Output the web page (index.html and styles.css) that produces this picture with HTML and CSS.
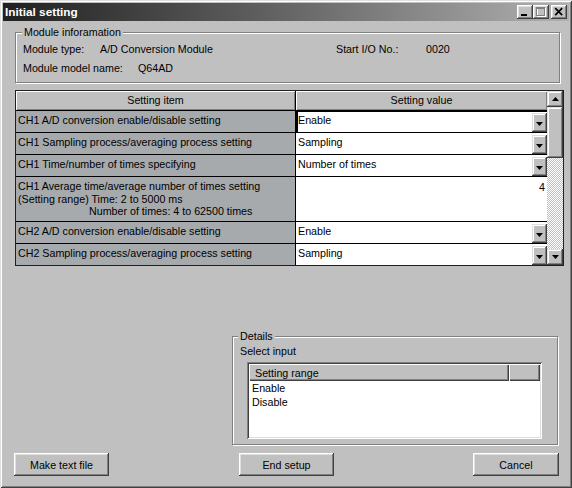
FILE: index.html
```html
<!DOCTYPE html>
<html>
<head>
<meta charset="utf-8">
<link rel="stylesheet" href="styles.css">
</head>
<body>
<div class="window">
  <div class="titlebar">
    <span class="title">Initial setting</span>
    <div class="caption-btns">
      <span class="cbtn"><svg width="16" height="14" viewBox="0 0 16 14"><rect x="4" y="9" width="6" height="2" fill="#000"/></svg></span>
      <span class="cbtn"><svg width="16" height="14" viewBox="0 0 16 14"><rect x="4.5" y="3.5" width="8" height="8" fill="none" stroke="#fff"/><rect x="3.5" y="2.5" width="8" height="8" fill="none" stroke="#808080"/><rect x="3" y="2" width="9" height="2" fill="#808080"/></svg></span>
      <span class="cbtn close"><svg width="16" height="14" viewBox="0 0 16 14"><path d="M4.2 3.2l7 7M11.2 3.2l-7 7" stroke="#000" stroke-width="1.7" fill="none"/></svg></span>
    </div>
  </div>
  <div class="client">
    <fieldset class="group module">
      <legend class="legend">Module inforamation</legend>
      <div class="info">
        <div class="info-row"><span class="k1">Module type:</span><span class="v1">A/D Conversion Module</span><span class="k2">Start I/O No.:</span><span>0020</span></div>
        <div class="info-row"><span class="k3">Module model name:</span><span>Q64AD</span></div>
      </div>
    </fieldset>

    <div class="grid-frame">
      <div class="grid">
        <div class="row head"><div class="hc hc1">Setting item</div><div class="hc hc2">Setting value</div></div>
        <div class="row"><div class="item">CH1 A/D conversion enable/disable setting</div><div class="val focus"><span class="vtext">Enable</span><span class="dd"><svg width="7" height="4" viewBox="0 0 7 4"><path d="M0 0h7L3.5 4z" fill="#000"/></svg></span></div></div>
        <div class="row"><div class="item">CH1 Sampling process/averaging process setting</div><div class="val"><span class="vtext">Sampling</span><span class="dd"><svg width="7" height="4" viewBox="0 0 7 4"><path d="M0 0h7L3.5 4z" fill="#000"/></svg></span></div></div>
        <div class="row"><div class="item">CH1 Time/number of times specifying</div><div class="val"><span class="vtext">Number of times</span><span class="dd"><svg width="7" height="4" viewBox="0 0 7 4"><path d="M0 0h7L3.5 4z" fill="#000"/></svg></span></div></div>
        <div class="row tall"><div class="item multi"><span>CH1 Average time/average number of times setting</span><span>(Setting range) Time: 2 to 5000 ms</span><span class="indent">Number of times: 4 to 62500 times</span></div><div class="val num">4</div></div>
        <div class="row"><div class="item">CH2 A/D conversion enable/disable setting</div><div class="val"><span class="vtext">Enable</span><span class="dd"><svg width="7" height="4" viewBox="0 0 7 4"><path d="M0 0h7L3.5 4z" fill="#000"/></svg></span></div></div>
        <div class="row last"><div class="item">CH2 Sampling process/averaging process setting</div><div class="val"><span class="vtext">Sampling</span><span class="dd"><svg width="7" height="4" viewBox="0 0 7 4"><path d="M0 0h7L3.5 4z" fill="#000"/></svg></span></div></div>
      </div>
      <div class="vscroll">
        <span class="sb-btn up"><svg width="7" height="4" viewBox="0 0 7 4"><path d="M0 4h7L3.5 0z" fill="#000"/></svg></span>
        <span class="thumb"></span>
        <span class="track"></span>
        <span class="sb-btn down"><svg width="7" height="4" viewBox="0 0 7 4"><path d="M0 0h7L3.5 4z" fill="#000"/></svg></span>
      </div>
    </div>

    <fieldset class="group details">
      <legend class="legend">Details</legend>
      <div class="details-body">
        <div class="sel-label">Select input</div>
        <div class="listbox">
          <div class="lb-head"><span class="lbh lbh1">Setting range</span><span class="lbh lbh2"></span></div>
          <div class="lb-item">Enable</div>
          <div class="lb-item">Disable</div>
        </div>
      </div>
    </fieldset>

    <div class="buttons">
      <span class="btn btn-make">Make text file</span>
      <span class="btn btn-end">End setup</span>
      <span class="btn btn-cancel">Cancel</span>
    </div>
  </div>
</div>
</body>
</html>
```

FILE: styles.css
```css
html, body {
  margin: 0;
  padding: 0;
  background: #c0c0c0;
}
body {
  font-family: "Liberation Sans", Arial, sans-serif;
  font-size: 10.7px;
  color: #000;
}
.window {
  width: 572px;
  height: 488px;
  box-sizing: border-box;
  padding: 3px;
  background: #c0c0c0;
  box-shadow: inset 1px 1px #dfdfdf, inset -1px -1px #404040, inset 2px 2px #fff, inset -2px -2px #808080;
}
.titlebar {
  height: 18px;
  display: flex;
  align-items: center;
  padding-left: 2px;
  background: linear-gradient(to right, #202020, #5e5e5e 45%, #b0b0b0);
}
.title {
  color: #fff;
  font-weight: bold;
  font-size: 11.8px;
  flex: 1;
}
.caption-btns {
  display: flex;
  padding-right: 2px;
}
.cbtn {
  width: 16px;
  height: 14px;
  background: #c0c0c0;
  box-shadow: inset -1px -1px #404040, inset 1px 1px #fff, inset -2px -2px #808080, inset 2px 2px #dfdfdf;
  display: block;
}
.cbtn svg { display: block; }
.cbtn.close { margin-left: 2px; }

.client {
  display: flex;
  flex-direction: column;
}

.group {
  margin: 0;
  padding: 0;
  border: 1px solid #808080;
  box-shadow: inset 1px 1px 0 #fff, 1px 1px 0 #fff;
  min-width: 0;
  box-sizing: border-box;
}
.legend {
  padding: 0 2px;
  margin-left: 6px;
  line-height: 12px;
  background: #c0c0c0;
}
.module {
  margin: 5px 0 0 12px;
  width: 545px;
}
.info {
  padding: 5px 0 7px 7px;
  display: flex;
  flex-direction: column;
  gap: 6px;
}
.info-row {
  display: flex;
  line-height: 13px;
  white-space: nowrap;
}
.k1 { width: 77px; }
.v1 { width: 236px; }
.k2 { width: 90px; }
.k3 { width: 115px; }

.grid-frame {
  display: flex;
  margin: 7px 0 0 12px;
  width: 549px;
  height: 176px;
  box-sizing: border-box;
  border: 1px solid #202020;
}
.grid {
  width: 531px;
  display: flex;
  flex-direction: column;
}
.row {
  display: flex;
  height: 22px;
  box-sizing: border-box;
  border-bottom: 1px solid #000;
}
.row.head { height: 20px; }
.row.tall { height: 45px; }
.row.last { height: 21px; border-bottom: none; }
.hc {
  display: flex;
  align-items: center;
  justify-content: center;
  background: #c0c0c0;
  box-shadow: inset 1px 1px #fff, inset -1px -1px #808080;
  padding-bottom: 1px;
  box-sizing: border-box;
}
.hc1 {
  width: 280px;
  border-right: 1px solid #000;
}
.hc2 { flex: 1; }
.item {
  width: 280px;
  box-sizing: border-box;
  border-right: 1px solid #000;
  background: #a7aaad;
  padding: 3px 0 0 2px;
  line-height: 12.5px;
  white-space: nowrap;
}
.item.multi {
  display: flex;
  flex-direction: column;
  align-items: flex-start;
}
.indent { padding-left: 71px; }
.val {
  flex: 1;
  background: #fff;
  display: flex;
}
.val.focus {
  box-shadow: inset 2px 1px 0 #000;
}
.vtext {
  flex: 1;
  padding: 3px 0 0 2px;
  line-height: 12.5px;
  white-space: nowrap;
}
.val.num {
  justify-content: flex-end;
  align-items: flex-start;
  padding: 4px 2px 0 0;
  line-height: 12px;
}
.dd, .sb-btn {
  width: 15px;
  height: 19px;
  align-self: flex-end;
  background: #c0c0c0;
  box-shadow: inset -1px -1px #404040, inset 1px 1px #dfdfdf, inset -2px -2px #808080, inset 2px 2px #fff;
  display: flex;
  align-items: center;
  justify-content: center;
}
.dd svg { margin-top: 2px; }
.vscroll {
  width: 16px;
  display: flex;
  flex-direction: column;
}
.sb-btn {
  width: 16px;
  height: 16px;
  align-self: auto;
  flex: none;
}
.thumb {
  height: 51px;
  flex: none;
  background: #c0c0c0;
  box-shadow: inset -1px -1px #404040, inset 1px 1px #dfdfdf, inset -2px -2px #808080, inset 2px 2px #fff;
}
.track {
  flex: 1;
  background: repeating-conic-gradient(#fff 0 25%, #c0c0c0 0 50%) 0 0 / 2px 2px;
}

.details {
  margin: 64px 0 0 229px;
  width: 326px;
}
.details .legend { margin-left: 5px; }
.details-body {
  padding: 3px 0 5px 7px;
}
.sel-label { line-height: 13px; }
.listbox {
  margin: 4px 0 0 7px;
  width: 295px;
  height: 77px;
  box-sizing: border-box;
  padding: 2px;
  background: #fff;
  box-shadow: inset 1px 1px #808080, inset -1px -1px #fff, inset 2px 2px #404040, inset -2px -2px #dfdfdf;
}
.lb-head {
  display: flex;
  height: 17px;
}
.lbh {
  background: #c0c0c0;
  box-shadow: inset 1px 1px #fff, inset -1px -1px #404040, inset -2px -2px #808080;
  display: flex;
  align-items: center;
}
.lbh1 {
  width: 260px;
  padding-left: 6px;
  box-sizing: border-box;
}
.lbh2 { flex: 1; }
.lb-item {
  line-height: 14px;
  padding-left: 3px;
}

.buttons {
  display: flex;
  margin-top: 8px;
  padding: 0 10px 0 11px;
}
.btn {
  height: 23px;
  box-sizing: border-box;
  display: flex;
  align-items: center;
  justify-content: center;
  background: #c0c0c0;
  box-shadow: inset -1px -1px #404040, inset 1px 1px #fff, inset -2px -2px #808080, inset 2px 2px #dfdfdf;
}
.btn-make { width: 95px; }
.btn-end { width: 95px; margin-left: 130px; }
.btn-cancel { width: 86px; margin-left: auto; }
```
